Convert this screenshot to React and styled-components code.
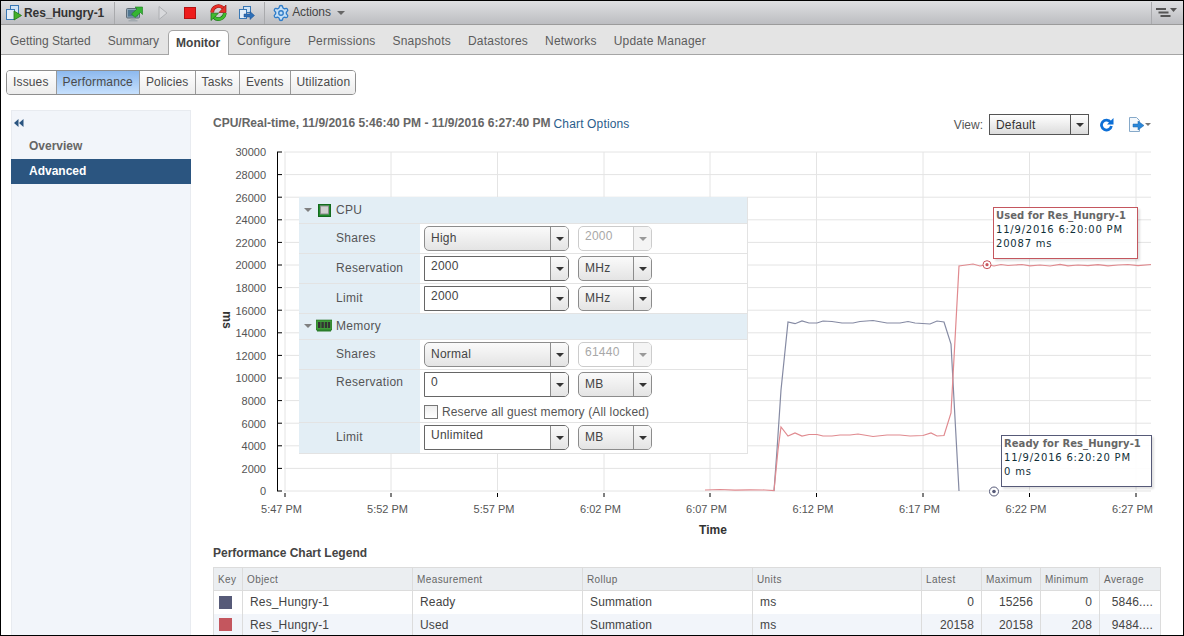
import React from "react"
import styled, { createGlobalStyle } from "styled-components"
import { Settings } from "lucide-react"

const GlobalStyle = createGlobalStyle`
  html, body { margin: 0; padding: 0; background: #fff; }
  body { font-family: "Liberation Sans", Arial, sans-serif; font-size: 12px; color: #555; }
  * { box-sizing: border-box; }
`

const Y_LABELS = [30000, 28000, 26000, 24000, 22000, 20000, 18000, 16000, 14000, 12000, 10000, 8000, 6000, 4000, 2000, 0]
const X_TICKS = [
  [285, "5:47 PM"], [391, "5:52 PM"], [497.5, "5:57 PM"], [604, "6:02 PM"], [710, "6:07 PM"],
  [816.5, "6:12 PM"], [923, "6:17 PM"], [1029.5, "6:22 PM"], [1136, "6:27 PM"],
]

const READY = "774,491 777,450 781,390 788,322 795,323.7 802,321 809,323 817,323 823,321 832,321.5 842,323 853,323 860,321.5 873,320.5 887,323 900,323 908,321.5 915,323 930,324 937,321 944,322 951,344 954,400 959,491"
const USED = "705,490 720,489.5 735,490.2 750,489.8 765,490 774,490.5 778,450 781,427 788,436 795,433 802,436 809,434.5 817,434.5 823,436 832,436 840,435 850,435 858,434 873,436.5 887,435 900,435 910,436 923,435.5 931,433 937,436 944,435.5 951,413 955,340 959,266 966,265 973,264 980,266 987,264.7 994,266 1001,264.5 1008,265.5 1015,265 1022,264.5 1030,265.8 1040,265 1050,266 1060,264.3 1068,265.8 1078,265 1088,265.6 1098,264.6 1108,265.8 1118,265 1128,264.5 1138,265.6 1151,264.5"

const TABS = ["Getting Started", "Summary", "Monitor", "Configure", "Permissions", "Snapshots", "Datastores", "Networks", "Update Manager"]
const SUB_TABS = ["Issues", "Performance", "Policies", "Tasks", "Events", "Utilization"]

const Frame = styled.div`
  width: 1184px;
  height: 636px;
  border: 1px solid #000;
  overflow: hidden;
  background: #fff;
`

const Toolbar = styled.div`
  height: 24px;
  display: flex;
  align-items: center;
  background: linear-gradient(#dfe0e2, #bcbdc1);
  border-bottom: 1px solid #9b9b9b;
  padding-left: 4px;
`

const ObjectName = styled.span`
  font-weight: bold;
  font-size: 12px;
  color: #333;
  margin-left: 1px;
  margin-right: 1px;
  letter-spacing: -0.1px;
`

const ToolSep = styled.div`
  width: 1px;
  height: 22px;
  background: #a9aaad;
  margin: ${p => p.$margin || "0 9px"};
`

const ToolIcon = styled.svg`
  display: block;
  flex: none;
  margin-left: ${p => p.$left || 0}px;
`

const ActionsLabel = styled.span`
  color: #444;
  font-size: 12px;
  margin: 0 0 2px 2px;
  letter-spacing: -0.1px;
`

const Caret = styled.span`
  width: 0;
  height: 0;
  flex: none;
  border-left: ${p => p.$size || 4}px solid transparent;
  border-right: ${p => p.$size || 4}px solid transparent;
  border-top: ${p => p.$size || 4}px solid ${p => p.$color || "#666"};
  margin-left: ${p => p.$left || 0}px;
`

const ToolRight = styled.div`
  margin-left: auto;
  display: flex;
  align-items: center;
  height: 100%;
  padding-right: 6px;
`

const TabBar = styled.div`
  height: 30px;
  display: flex;
  align-items: flex-end;
  background: #e4e4e4;
  border-bottom: 1px solid #a5a5a5;
  padding-left: 0.5px;
`

const Tab = styled.div`
  height: ${p => (p.$active ? "25px" : "29px")};
  line-height: ${p => (p.$active ? "24px" : "33px")};
  padding: 0 ${p => (p.$active ? "7.5px" : "8.5px")};
  margin-bottom: ${p => (p.$active ? "-1px" : "0")};
  font-size: 12px;
  letter-spacing: ${p => (p.$wide ? "0.2px" : "0")};
  font-weight: ${p => (p.$active ? "bold" : "normal")};
  color: ${p => (p.$active ? "#444" : "#5c5c5c")};
  background: ${p => (p.$active ? "#fff" : "transparent")};
  border: ${p => (p.$active ? "1px solid #a5a5a5" : "0")};
  border-bottom: 0;
  border-radius: 5px 5px 0 0;
  white-space: nowrap;
`

const SubTabs = styled.div`
  display: inline-flex;
  height: 25px;
  margin: 15px 0 0 5px;
  border: 1px solid #8e8e8e;
  border-radius: 4px;
  overflow: hidden;
  vertical-align: top;
`

const SubTab = styled.div`
  padding: 0 6px;
  line-height: 23px;
  font-size: 12px;
  color: #4a4a4a;
  letter-spacing: 0.15px;
  border-left: 1px solid #9a9a9a;
  background: ${p => (p.$active ? "linear-gradient(#8db9ee, #c6e0fd)" : "linear-gradient(#fff, #ececec)")};

  &:first-child {
    border-left: 0;
    padding-right: 7px;
  }

  &:last-child {
    padding-right: 5px;
  }
`

const Main = styled.div`
  display: flex;
  margin-top: 15px;
  height: 526px;
`

const Sidebar = styled.aside`
  width: 180px;
  margin-left: 10px;
  flex: none;
  background: #f2f5fa;
  border: 1px solid #e8ebf0;
`

const Collapse = styled.div`
  height: 23px;
  padding: 5px 0 0 2px;
`

const NavItem = styled.div`
  height: 25px;
  line-height: 24px;
  padding-left: 18px;
  margin: 0 -1px;
  font-size: 12px;
  font-weight: bold;
  color: ${p => (p.$active ? "#fff" : "#666")};
  background: ${p => (p.$active ? "#2b5580" : "transparent")};
`

const Content = styled.section`
  width: 948px;
  margin-left: 22px;
  flex: none;
`

const ChartHeader = styled.div`
  height: 30px;
  display: flex;
  align-items: flex-start;
`

const ChartTitle = styled.span`
  font-weight: bold;
  color: #666;
  font-size: 12px;
  margin-top: 6px;
`

const ChartLink = styled.span`
  color: #2b5d8c;
  font-size: 12px;
  letter-spacing: 0.15px;
  margin: 7px 0 0 3px;
`

const ViewTools = styled.div`
  margin-left: auto;
  display: flex;
  align-items: center;
  height: 21px;
  margin-top: 4px;
  margin-right: 10px;
`

const ViewLabel = styled.span`
  color: #555;
  margin-right: 6px;
`

const ViewSelect = styled.div`
  width: 100px;
  height: 21px;
  display: flex;
  border: 1px solid #555;
  background: linear-gradient(#fff, #dcdcdc);
  color: #333;
  line-height: 20px;
  padding-left: 6px;
  letter-spacing: 0.2px;
`

const ViewArrow = styled.div`
  margin-left: auto;
  width: 18px;
  border-left: 1px solid #555;
  display: flex;
  align-items: center;
  justify-content: center;
`

const ExportButton = styled.span`
  display: flex;
  align-items: center;
  margin-left: 14px;
`

const ChartWrap = styled.div`
  position: relative;
  height: 400px;
`

const ChartSvg = styled.svg`
  display: block;
  font-family: "Liberation Sans", Arial, sans-serif;
`

const SettingsPanel = styled.div`
  position: absolute;
  left: 86px;
  top: 57px;
  width: 449px;
  background: #fff;
  border-right: 1px solid #e3e3e3;
  border-bottom: 1px solid #e3e3e3;
`

const SectionHead = styled.div`
  height: ${p => p.$height}px;
  display: flex;
  align-items: center;
  padding: 0 0 ${p => p.$lift || 0}px 5px;
  background: #e3eef5;
  border-bottom: 1px solid #e3e3e3;
  color: #555;
`

const SectionName = styled.span`
  margin-left: ${p => p.$gap}px;
  letter-spacing: 0.3px;
`

const Twisty = styled.span`
  width: 0;
  height: 0;
  border-left: 4px solid transparent;
  border-right: 4px solid transparent;
  border-top: 4px solid #808080;
  margin-right: ${p => p.$gap}px;
`

const FormRow = styled.div`
  display: flex;
  height: ${p => p.$height || 30}px;
  border-bottom: ${p => (p.$last ? "0" : "1px solid #e3e3e3")};
`

const FormLabel = styled.div`
  width: 121px;
  flex: none;
  background: #e3eef5;
  padding: ${p => (p.$top ? "5px" : "7px")} 0 0 37px;
  color: #555;
  letter-spacing: 0.3px;
`

const FormFields = styled.div`
  padding: 2px 0 0 4px;
`

const FieldLine = styled.div`
  display: flex;
  gap: 9px;
`

const Select = styled.div`
  width: ${p => p.$width}px;
  height: 25px;
  display: flex;
  border: 1px solid ${p => (p.$disabled ? "#ccc" : p.$editable ? "#666" : "#8c8c8c")};
  border-radius: ${p => (p.$editable ? "0 5px 5px 0" : "5px")};
  background: ${p => (p.$editable || p.$disabled ? "#fff" : "linear-gradient(#fafafa, #e4e4e4)")};
  overflow: hidden;
`

const SelectValue = styled.div`
  flex: 1;
  padding: ${p => (p.$raised ? "2px" : "4px")} 0 0 6px;
  font-size: 12px;
  letter-spacing: 0.25px;
  color: ${p => (p.$disabled ? "#a8a8a8" : "#444")};
`

const SelectArrow = styled.div`
  width: 18px;
  display: flex;
  align-items: center;
  justify-content: center;
  border-left: 1px solid ${p => (p.$disabled ? "#ccc" : "#8c8c8c")};
  background: ${p => (p.$disabled ? "#f4f4f4" : "linear-gradient(#fafafa, #e4e4e4)")};
`

const CheckLine = styled.label`
  display: flex;
  align-items: center;
  margin-top: 8px;
  color: #555;
  letter-spacing: 0.14px;
`

const Checkbox = styled.span`
  width: 14px;
  height: 14px;
  border: 1px solid #777;
  background: linear-gradient(#eee, #fff);
  margin-right: 4px;
`

const Tip = styled.div`
  position: absolute;
  left: ${p => p.$left}px;
  top: ${p => p.$top}px;
  width: ${p => p.$width}px;
  height: 52px;
  padding: 1px 2px;
  border: 1px solid ${p => p.$color};
  background: rgba(255, 255, 255, 0.92);
  box-shadow: 2px 2px 2px rgba(0, 0, 0, 0.12);
  font-family: "DejaVu Sans", Verdana, sans-serif;
  font-size: 10px;
  line-height: 14px;
  color: #0f2f38;
  letter-spacing: 0.8px;
  white-space: nowrap;
`

const TipTitle = styled.div`
  font-weight: bold;
  color: #666;
  letter-spacing: 0.05px;
`

const LegendTitle = styled.h3`
  margin: 6px 0 6px;
  font-size: 12px;
  line-height: 15px;
  font-weight: bold;
  color: #444;
`

const LegendTable = styled.table`
  width: 947px;
  table-layout: fixed;
  border-collapse: collapse;
  border: 1px solid #dcdcdc;
`

const Th = styled.th`
  height: 23px;
  padding: 0 4px;
  font-size: 10px;
  font-weight: normal;
  letter-spacing: 0.4px;
  text-align: left;
  color: #666;
  background: #ebeef1;
  border: 1px solid #dcdcdc;
  white-space: nowrap;
`

const Tr = styled.tr`
  background: ${p => (p.$alt ? "#f2f5fa" : "#fff")};
`

const Td = styled.td`
  height: 23px;
  padding: ${p => (p.$num ? "0 7px 0 0" : "0 7px")};
  font-size: 12px;
  letter-spacing: 0.15px;
  color: #444;
  text-align: ${p => (p.$num ? "right" : "left")};
  border-left: 1px solid #dcdcdc;
  white-space: nowrap;
`

const Swatch = styled.div`
  width: 13px;
  height: 13px;
  background: ${p => p.$color};
  margin-left: -2px;
`

function SelectBox({ value, width, editable, disabled }) {
  return (
    <Select $width={width} $editable={editable} $disabled={disabled}>
      <SelectValue $raised={editable || disabled} $disabled={disabled}>{value}</SelectValue>
      <SelectArrow $disabled={disabled}>
        <Caret $color={disabled ? "#999" : "#333"} />
      </SelectArrow>
    </Select>
  )
}

function VmIcon() {
  return (
    <ToolIcon width="18" height="18" viewBox="0 0 18 18">
      <rect x="5.5" y="1.5" width="8" height="8" fill="#cfe3f5" stroke="#3a78b5" />
      <rect x="1.5" y="5.5" width="8" height="10" fill="#e3eef8" stroke="#3a78b5" />
      <path d="M9 7l7.5 4.5L9 16z" fill="#43b02a" stroke="#1f7a14" strokeWidth=".8" />
    </ToolIcon>
  )
}

function ConsoleIcon() {
  return (
    <ToolIcon width="17" height="18" viewBox="0 0 17 18" $left={2}>
      <rect x="0.5" y="4.5" width="13" height="9.5" rx="1" fill="#8fa6b8" stroke="#5d6b76" />
      <rect x="2" y="6" width="10" height="6.5" fill="#4f7691" />
      <path d="M4.5 14.5h5V16h2v1.5h-9V16h2z" fill="#a4abb1" />
      <path d="M5.5 10l5.5-5-2-2h7.5v7.5l-2-2-5.5 5z" fill="#35b534" stroke="#1b7f1c" strokeWidth=".6" />
    </ToolIcon>
  )
}

function PlayIcon() {
  return (
    <ToolIcon width="10" height="16" viewBox="0 0 10 16" $left={15}>
      <path d="M1 1.5l8 6.5-8 6.5z" fill="#d8d9dc" stroke="#aeb0b3" />
    </ToolIcon>
  )
}

function StopIcon() {
  return (
    <ToolIcon width="12" height="12" viewBox="0 0 12 12" $left={16}>
      <rect x="0.5" y="0.5" width="11" height="11" fill="#ee1c1c" stroke="#b51212" />
    </ToolIcon>
  )
}

function RestartIcon() {
  return (
    <ToolIcon width="17" height="17" viewBox="0 0 17 17" $left={14}>
      <path d="M2.2 8.5A6.3 6.3 0 0 1 13 4" fill="none" stroke="#8f1712" strokeWidth="3.6" />
      <path d="M2.2 8.5A6.3 6.3 0 0 1 13 4" fill="none" stroke="#ea3029" strokeWidth="2.6" />
      <path d="M16 1v7.5H9z" fill="#ea3029" stroke="#8f1712" strokeWidth=".7" />
      <path d="M14.8 9A6.3 6.3 0 0 1 4 13.2" fill="none" stroke="#176f14" strokeWidth="3.6" />
      <path d="M14.8 9A6.3 6.3 0 0 1 4 13.2" fill="none" stroke="#40bb2e" strokeWidth="2.6" />
      <path d="M1 16.5V9.2h7.5z" fill="#40bb2e" stroke="#176f14" strokeWidth=".7" />
    </ToolIcon>
  )
}

function MigrateIcon() {
  return (
    <ToolIcon width="17" height="17" viewBox="0 0 17 17" $left={11}>
      <rect x="5.5" y="2.5" width="7" height="6" fill="#cfe3f5" stroke="#3a78b5" />
      <rect x="1.5" y="5.5" width="7" height="9" fill="#e3eef8" stroke="#3a78b5" />
      <path d="M6 10h6V7.5l4.5 4-4.5 4V13H6z" fill="#2d6fb8" stroke="#1c4f8c" strokeWidth=".5" />
    </ToolIcon>
  )
}

function ViewToggleIcon() {
  return (
    <ToolIcon width="21" height="9" viewBox="0 0 21 9" $left={4}>
      <path d="M0 0h10v2H0zM2.5 3.5h10v2h-10zM4.5 7h10v2h-10z" fill="#555" />
      <path d="M14 0h7l-3.5 4z" fill="#555" />
    </ToolIcon>
  )
}

function CpuIcon() {
  return (
    <ToolIcon width="13" height="13" viewBox="0 0 13 13">
      <rect x="0.5" y="0.5" width="12" height="12" fill="#1f8a2b" stroke="#136a1e" />
      <rect x="2.5" y="2" width="8" height="8" fill="#d0d0d0" stroke="#8d8d8d" />
    </ToolIcon>
  )
}

function MemoryIcon() {
  return (
    <ToolIcon width="16" height="13" viewBox="0 0 16 13">
      <rect x="0" y="1" width="16" height="10" fill="#3f9a3a" stroke="#1d6a1d" strokeWidth=".6" />
      <path d="M2 3h2.4v6H2zM5.4 3h2.4v6H5.4zM8.8 3h2.4v6H8.8zM12 3h2.2v6H12z" fill="#333" />
      <path d="M1 11h14v1.5H1z" fill="#2a7d2a" />
    </ToolIcon>
  )
}

function RefreshIcon() {
  return (
    <ToolIcon width="15" height="15" viewBox="0 0 15 15" $left={10}>
      <path d="M11.6 5.2A5 5 0 1 0 12.4 9" fill="none" stroke="#0d6fd6" strokeWidth="2.8" />
      <path d="M14.5 1v6.5H8z" fill="#0d6fd6" />
    </ToolIcon>
  )
}

function ExportIcon() {
  return (
    <ToolIcon width="17" height="17" viewBox="0 0 17 17">
      <path d="M1.5 1.5h7l3 3v11h-10z" fill="#f4f8fc" stroke="#86a9c9" />
      <path d="M5 8h5V5l6 4.5-6 4.5v-3H5z" fill="#2a86d8" stroke="#1b66ad" strokeWidth=".5" />
    </ToolIcon>
  )
}

function Chart() {
  const yAt = i => 152 + i * 22.6
  return (
    <ChartSvg width="948" height="400" viewBox="213 140 948 400">
      {Y_LABELS.map((label, i) => (
        <g key={label}>
          <line x1="284" x2="1151" y1={yAt(i)} y2={yAt(i)} stroke="#e4e4e4" />
          <line x1="277" x2="282" y1={yAt(i)} y2={yAt(i)} stroke="#000" />
          <text x="266" y={yAt(i) + 4.4} textAnchor="end" fontSize="11" fill="#555">{label}</text>
        </g>
      ))}
      <line x1="277.5" x2="277.5" y1="152" y2="491" stroke="#000" />
      {X_TICKS.map(([x, label]) => (
        <g key={label}>
          <line x1={x} x2={x} y1="152" y2="491" stroke="#e4e4e4" />
          <line x1={x} x2={x} y1="493" y2="497" stroke="#000" />
          <text x={x - 3.5} y="513" textAnchor="middle" fontSize="11" fill="#555">{label}</text>
        </g>
      ))}
      <polyline points={READY} fill="none" stroke="#858aa3" strokeWidth="1.2" />
      <polyline points={USED} fill="none" stroke="#e08a8f" strokeWidth="1.2" />
      <circle cx="987" cy="264.7" r="4" fill="#fff" stroke="#c9565e" />
      <circle cx="987" cy="264.7" r="1.6" fill="#c9565e" />
      <circle cx="994" cy="491.5" r="4.5" fill="#fff" stroke="#565a78" />
      <circle cx="994" cy="491.5" r="1.8" fill="#565a78" />
      <text x="223" y="320" fontSize="12" fontWeight="bold" fill="#333" textAnchor="middle" transform="rotate(90 223 320)">ms</text>
      <text x="713" y="534" fontSize="12" fontWeight="bold" fill="#333" textAnchor="middle">Time</text>
    </ChartSvg>
  )
}

function Legend() {
  return (
    <LegendTable>
      <colgroup>
        <col style={{ width: 29 }} />
        <col style={{ width: 170 }} />
        <col style={{ width: 170 }} />
        <col style={{ width: 170 }} />
        <col style={{ width: 169 }} />
        <col style={{ width: 60 }} />
        <col style={{ width: 59 }} />
        <col style={{ width: 59 }} />
        <col style={{ width: 61 }} />
      </colgroup>
      <thead>
        <tr>
          <Th>Key</Th><Th>Object</Th><Th>Measurement</Th><Th>Rollup</Th><Th>Units</Th>
          <Th>Latest</Th><Th>Maximum</Th><Th>Minimum</Th><Th>Average</Th>
        </tr>
      </thead>
      <tbody>
        <Tr>
          <Td><Swatch $color="#565a78" /></Td>
          <Td>Res_Hungry-1</Td><Td>Ready</Td><Td>Summation</Td><Td>ms</Td>
          <Td $num>0</Td><Td $num>15256</Td><Td $num>0</Td><Td $num>5846....</Td>
        </Tr>
        <Tr $alt>
          <Td><Swatch $color="#c4565e" /></Td>
          <Td>Res_Hungry-1</Td><Td>Used</Td><Td>Summation</Td><Td>ms</Td>
          <Td $num>20158</Td><Td $num>20158</Td><Td $num>208</Td><Td $num>9484....</Td>
        </Tr>
      </tbody>
    </LegendTable>
  )
}

export default function App() {
  return (
    <>
      <GlobalStyle />
      <Frame>
        <Toolbar>
          <VmIcon />
          <ObjectName>Res_Hungry-1</ObjectName>
          <ToolSep />
          <ConsoleIcon />
          <PlayIcon />
          <StopIcon />
          <RestartIcon />
          <MigrateIcon />
          <ToolSep $margin="0 7px 0 9px" />
          <Settings size={18} color="#2f7cc8" fill="#c5dff5" strokeWidth={1.8} />
          <ActionsLabel>Actions</ActionsLabel>
          <Caret $left={6} />
          <ToolRight>
            <ToolSep $margin="0" />
            <ViewToggleIcon />
          </ToolRight>
        </Toolbar>

        <TabBar>
          {TABS.map((t, i) => <Tab key={t} $active={t === "Monitor"} $wide={i > 2}>{t}</Tab>)}
        </TabBar>

        <SubTabs>
          {SUB_TABS.map(t => <SubTab key={t} $active={t === "Performance"}>{t}</SubTab>)}
        </SubTabs>

        <Main>
          <Sidebar>
            <Collapse>
              <svg width="10" height="8" viewBox="0 0 10 8"><path d="M4.5 0v8L0 4zM9.5 0v8L5 4z" fill="#2b5580" /></svg>
            </Collapse>
            <NavItem>Overview</NavItem>
            <NavItem $active>Advanced</NavItem>
          </Sidebar>

          <Content>
            <ChartHeader>
              <ChartTitle>CPU/Real-time, 11/9/2016 5:46:40 PM - 11/9/2016 6:27:40 PM</ChartTitle>
              <ChartLink>Chart Options</ChartLink>
              <ViewTools>
                <ViewLabel>View:</ViewLabel>
                <ViewSelect>
                  Default
                  <ViewArrow><Caret $color="#333" /></ViewArrow>
                </ViewSelect>
                <RefreshIcon />
                <ExportButton>
                  <ExportIcon />
                  <Caret $color="#777" $size={3} />
                </ExportButton>
              </ViewTools>
            </ChartHeader>

            <ChartWrap>
              <Chart />

              <SettingsPanel>
                <SectionHead $height={27}>
                  <Twisty $gap={6} />
                  <CpuIcon />
                  <SectionName $gap={5}>CPU</SectionName>
                </SectionHead>
                <FormRow>
                  <FormLabel>Shares</FormLabel>
                  <FormFields><FieldLine>
                    <SelectBox value="High" width={145} />
                    <SelectBox value="2000" width={74} disabled />
                  </FieldLine></FormFields>
                </FormRow>
                <FormRow>
                  <FormLabel>Reservation</FormLabel>
                  <FormFields><FieldLine>
                    <SelectBox value="2000" width={145} editable />
                    <SelectBox value="MHz" width={74} />
                  </FieldLine></FormFields>
                </FormRow>
                <FormRow>
                  <FormLabel>Limit</FormLabel>
                  <FormFields><FieldLine>
                    <SelectBox value="2000" width={145} editable />
                    <SelectBox value="MHz" width={74} />
                  </FieldLine></FormFields>
                </FormRow>

                <SectionHead $height={26} $lift={2}>
                  <Twisty $gap={4} />
                  <MemoryIcon />
                  <SectionName $gap={4}>Memory</SectionName>
                </SectionHead>
                <FormRow>
                  <FormLabel>Shares</FormLabel>
                  <FormFields><FieldLine>
                    <SelectBox value="Normal" width={145} />
                    <SelectBox value="61440" width={74} disabled />
                  </FieldLine></FormFields>
                </FormRow>
                <FormRow $height={53}>
                  <FormLabel $top>Reservation</FormLabel>
                  <FormFields>
                    <FieldLine>
                      <SelectBox value="0" width={145} editable />
                      <SelectBox value="MB" width={74} />
                    </FieldLine>
                    <CheckLine>
                      <Checkbox />
                      Reserve all guest memory (All locked)
                    </CheckLine>
                  </FormFields>
                </FormRow>
                <FormRow $last>
                  <FormLabel>Limit</FormLabel>
                  <FormFields><FieldLine>
                    <SelectBox value="Unlimited" width={145} editable />
                    <SelectBox value="MB" width={74} />
                  </FieldLine></FormFields>
                </FormRow>
              </SettingsPanel>

              <Tip $left={780} $top={67} $width={145} $color="#c4565e">
                <TipTitle>Used for Res_Hungry-1</TipTitle>
                <div>11/9/2016 6:20:00 PM</div>
                <div>20087 ms</div>
              </Tip>
              <Tip $left={788} $top={295} $width={151} $color="#565a78">
                <TipTitle>Ready for Res_Hungry-1</TipTitle>
                <div>11/9/2016 6:20:20 PM</div>
                <div>0 ms</div>
              </Tip>
            </ChartWrap>

            <LegendTitle>Performance Chart Legend</LegendTitle>
            <Legend />
          </Content>
        </Main>
      </Frame>
    </>
  )
}
